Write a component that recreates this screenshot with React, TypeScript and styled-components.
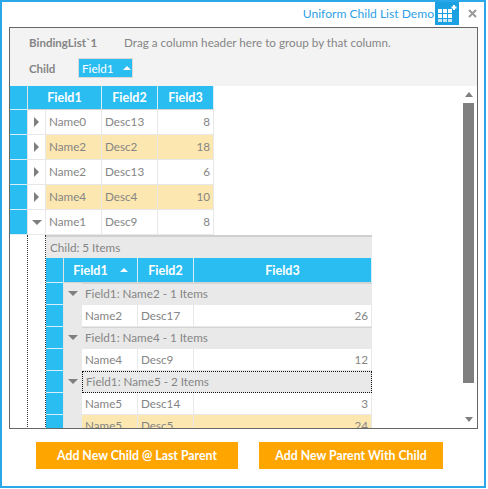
import React from "react";
import styled, { createGlobalStyle } from "styled-components";

const Global = createGlobalStyle`
  html, body { margin: 0; padding: 0; background: #fff; }
  body { font-family: Lato, "Noto Sans", "Liberation Sans", sans-serif; font-size: 11.7px; color: #858585; }
`;

const Window = styled.div`
  box-sizing: border-box;
  width: 486px;
  height: 488px;
  border: 2px solid #2aa7e8;
  display: flex;
  flex-direction: column;
  background: #fff;
`;
const TitleBar = styled.div`
  height: 23px;
  padding-bottom: 2px;
  display: flex;
  justify-content: flex-end;
  align-items: flex-start;
`;
const Title = styled.div`
  font-size: 12.1px;
  line-height: 24px;
  color: #2f9fe8;
  margin-right: 1px;
`;
const AppIcon = styled.div`
  width: 24px;
  height: 23px;
  background: #1ba1e2;
  display: flex;
  align-items: center;
  justify-content: center;
`;
const CloseBox = styled.div`
  width: 26px;
  margin-right: -1px;
  height: 22px;
  display: flex;
  align-items: center;
  justify-content: center;
`;
const Frame = styled.div`
  box-sizing: border-box;
  margin-left: 7px;
  width: 469px;
  height: 402px;
  border: 1px solid #666;
  display: flex;
  flex-direction: column;
`;
const Toolbar = styled.div`
  height: 58px;
  flex: none;
  background: #f3f3f3;
  padding-left: 19px;
  box-sizing: border-box;
`;
const ToolRow = styled.div<{ $h: number }>`
  box-sizing: border-box;
  height: ${(p) => p.$h}px;
  padding-bottom: ${(p) => (p.$h > 20 ? 2 : 0)}px;
  display: flex;
  align-items: center;
`;
const ToolLabel = styled.div<{ $w: number }>`
  width: ${(p) => p.$w}px;
  font-weight: 700;
  font-size: 11.5px;
  color: #858585;
`;
const GroupChip = styled.div`
  box-sizing: border-box;
  width: 55px;
  height: 20px;
  background: #29bdf2;
  border: 1px solid #d9d9d9;
  color: #fff;
  display: flex;
  align-items: center;
  padding: 0 0 1px 3px;
  gap: 9px;
`;
const Body = styled.div`
  flex: 1;
  min-height: 0;
  display: flex;
`;
const Pane = styled.div`
  flex: 1;
  min-width: 0;
  overflow: hidden;
`;
const Scrollbar = styled.div`
  width: 11px;
  margin-right: 3px;
  flex: none;
  display: flex;
  flex-direction: column;
  align-items: center;
`;
const ScrollArrow = styled.div<{ $up?: boolean }>`
  width: 0;
  height: 0;
  border-left: 4.5px solid transparent;
  border-right: 4.5px solid transparent;
  ${(p) => (p.$up ? "border-bottom: 5px solid #7f7f7f;" : "border-top: 5px solid #7f7f7f;")}
  margin-top: ${(p) => (p.$up ? "6px" : "34px")};
`;
const ScrollThumb = styled.div`
  width: 11px;
  height: 280px;
  background: #7f7f7f;
  margin-top: 6px;
`;

const Row = styled.div<{ $cols: string; $h: number }>`
  display: grid;
  grid-template-columns: ${(p) => p.$cols};
  height: ${(p) => p.$h}px;
  width: max-content;
`;
const Indicator = styled.div`
  background: #29bdf2;
  box-sizing: border-box;
  border-bottom: 1px solid #d8eef8;
  border-right: 1px solid #e4e4e4;
`;
const HeaderCell = styled.div`
  box-sizing: border-box;
  background: #29bdf2;
  color: #fff;
  font-weight: 700;
  font-size: 12.5px;
  display: flex;
  align-items: center;
  justify-content: center;
  gap: 12px;
  border-right: 1px solid #d8eef8;
  border-bottom: 1px solid #d4d4d4;
`;
const Expander = styled.div<{ $bg?: string }>`
  box-sizing: border-box;
  display: flex;
  align-items: center;
  justify-content: center;
  background: ${(p) => p.$bg ?? "#fff"};
  border-bottom: 1px solid ${(p) => p.$bg ?? "#e8e8e8"};
  border-right: 1px solid ${(p) => p.$bg ?? "#e8e8e8"};
`;
const Cell = styled.div<{ $alt?: boolean; $right?: boolean; $lift: number }>`
  box-sizing: border-box;
  background: ${(p) => (p.$alt ? "#fde7b0" : "#fff")};
  border-right: 1px solid #e8e8e8;
  border-bottom: 1px solid #e8e8e8;
  padding: 0 3px ${(p) => p.$lift}px;
  display: flex;
  align-items: center;
  justify-content: ${(p) => (p.$right ? "flex-end" : "flex-start")};
  color: #858585;
`;
const TriRight = styled.div`
  width: 0; height: 0;
  border-top: 5px solid transparent;
  border-bottom: 5px solid transparent;
  border-left: 5px solid #7f7f7f;
`;
const TriDown = styled.div`
  width: 0; height: 0;
  border-left: 5px solid transparent;
  border-right: 5px solid transparent;
  border-top: 5px solid #7f7f7f;
`;
const TriUp = styled.div`
  width: 0; height: 0;
  border-left: 4px solid transparent;
  border-right: 4px solid transparent;
  border-bottom: 4px solid #fff;
`;
const Detail = styled.div`
  display: flex;
`;
const DottedGutter = styled.div`
  width: 18px;
  flex: none;
  box-sizing: border-box;
  border-right: 1px dotted #333;
`;
const ChildPanel = styled.div`
  width: 326px;
  flex: none;
`;
const ChildTitle = styled.div`
  box-sizing: border-box;
  height: 23px;
  background: #e9e9e9;
  border-top: 2px solid #cfcfcf;
  padding: 0 0 2px 4px;
  display: flex;
  align-items: center;
`;
const GroupLabel = styled.div<{ $focus?: boolean }>`
  box-sizing: border-box;
  background: #e9e9e9;
  border-top: ${(p) => (p.$focus ? "1px dotted #111" : "1px solid #d4d4d4")};
  ${(p) => p.$focus && "border-bottom: 1px dotted #111; border-left: 1px dotted #111; border-right: 1px dotted #111;"}
  padding: 0 0 3px 3px;
  display: flex;
  align-items: center;
`;
const Footer = styled.div`
  flex: 1;
  display: flex;
  gap: 21px;
  padding: 13px 0 0 34px;
`;
const ActionButton = styled.button<{ $w: number }>`
  width: ${(p) => p.$w}px;
  height: 27px;
  border: 0;
  padding: 0;
  background: #ffa500;
  color: #fff;
  font-family: inherit;
  font-weight: 700;
  font-size: 12.3px;
`;

const masterCols = "18px 18px 56px 56px 56px";
const childHeadCols = "18px 74px 56px 178px";
const childRowCols = "18px 18px 56px 56px 178px";
const childGroupCols = "18px 18px 290px";

const master = [
  ["Name0", "Desc13", "8", false],
  ["Name2", "Desc2", "18", true],
  ["Name2", "Desc13", "6", false],
  ["Name4", "Desc4", "10", true],
] as const;

const groups = [
  { label: "Field1: Name2 - 1 Items", rows: [["Name2", "Desc17", "26", false]] },
  { label: "Field1: Name4 - 1 Items", rows: [["Name4", "Desc9", "12", false]] },
  {
    label: "Field1: Name5 - 2 Items",
    focus: true,
    rows: [
      ["Name5", "Desc14", "3", false],
      ["Name5", "Desc5", "24", true],
    ],
  },
] as const;

function GridIcon() {
  return (
    <svg width="22" height="20" viewBox="0 0 22 20">
      <g fill="#fff">
        <rect x="2" y="5" width="4" height="4" />
        <rect x="7" y="5" width="4" height="4" />
        <rect x="12" y="5" width="4" height="4" />
        <rect x="2" y="10" width="4" height="4" />
        <rect x="7" y="10" width="4" height="4" />
        <rect x="12" y="10" width="4" height="4" />
        <rect x="2" y="15" width="4" height="3" opacity="0.75" />
        <rect x="7" y="15" width="4" height="3" opacity="0.75" />
        <rect x="12" y="15" width="4" height="3" opacity="0.75" />
        <path d="M17 1h2v1.5h1.5v2H19V6h-2V4.5h-1.5v-2H17z" />
      </g>
    </svg>
  );
}

function CloseIcon() {
  return (
    <svg width="9" height="9" viewBox="0 0 9 9">
      <path d="M1 1l7 7M8 1L1 8" stroke="#9a9a9a" strokeWidth="2" fill="none" />
    </svg>
  );
}

export default function App() {
  return (
    <>
      <Global />
      <Window>
        <TitleBar>
          <Title>Uniform Child List Demo</Title>
          <AppIcon><GridIcon /></AppIcon>
          <CloseBox><CloseIcon /></CloseBox>
        </TitleBar>
        <Frame>
          <Toolbar>
            <ToolRow $h={30}>
              <ToolLabel $w={95}>BindingList`1</ToolLabel>
              <span>Drag a column header here to group by that column.</span>
            </ToolRow>
            <ToolRow $h={20}>
              <ToolLabel $w={49}>Child</ToolLabel>
              <GroupChip>Field1 <TriUp /></GroupChip>
            </ToolRow>
          </Toolbar>
          <Body>
            <Pane>
              <Row $cols="18px 74px 56px 56px" $h={24}>
                <Indicator />
                <HeaderCell>Field1</HeaderCell>
                <HeaderCell>Field2</HeaderCell>
                <HeaderCell>Field3</HeaderCell>
              </Row>
              {master.map((r, i) => (
                <Row key={i} $cols={masterCols} $h={25}>
                  <Indicator />
                  <Expander><TriRight /></Expander>
                  <Cell $lift={2} $alt={r[3]}>{r[0]}</Cell>
                  <Cell $lift={2} $alt={r[3]}>{r[1]}</Cell>
                  <Cell $lift={2} $alt={r[3]} $right>{r[2]}</Cell>
                </Row>
              ))}
              <Row $cols={masterCols} $h={25}>
                <Indicator />
                <Expander><TriDown /></Expander>
                <Cell $lift={2}>Name1</Cell>
                <Cell $lift={2}>Desc9</Cell>
                <Cell $lift={2} $right>8</Cell>
              </Row>
              <Detail>
                <DottedGutter />
                <DottedGutter />
                <ChildPanel>
                  <ChildTitle>Child: 5 Items</ChildTitle>
                  <Row $cols={childHeadCols} $h={25}>
                    <Indicator />
                    <HeaderCell>Field1 <TriUp /></HeaderCell>
                    <HeaderCell>Field2</HeaderCell>
                    <HeaderCell>Field3</HeaderCell>
                  </Row>
                  {groups.map((g, gi) => (
                    <React.Fragment key={gi}>
                      <Row $cols={childGroupCols} $h={22}>
                        <Indicator />
                        <Expander $bg="#e9e9e9"><TriDown /></Expander>
                        <GroupLabel $focus={"focus" in g}>{g.label}</GroupLabel>
                      </Row>
                      {g.rows.map((r, ri) => (
                        <Row key={ri} $cols={childRowCols} $h={22}>
                          <Indicator />
                          <Expander $bg="#e9e9e9" />
                          <Cell $lift={1} $alt={r[3]}>{r[0]}</Cell>
                          <Cell $lift={1} $alt={r[3]}>{r[1]}</Cell>
                          <Cell $lift={1} $alt={r[3]} $right>{r[2]}</Cell>
                        </Row>
                      ))}
                    </React.Fragment>
                  ))}
                </ChildPanel>
              </Detail>
            </Pane>
            <Scrollbar>
              <ScrollArrow $up />
              <ScrollThumb />
              <ScrollArrow />
            </Scrollbar>
          </Body>
        </Frame>
        <Footer>
          <ActionButton $w={202}>Add New Child @ Last Parent</ActionButton>
          <ActionButton $w={184}>Add New Parent With Child</ActionButton>
        </Footer>
      </Window>
    </>
  );
}
